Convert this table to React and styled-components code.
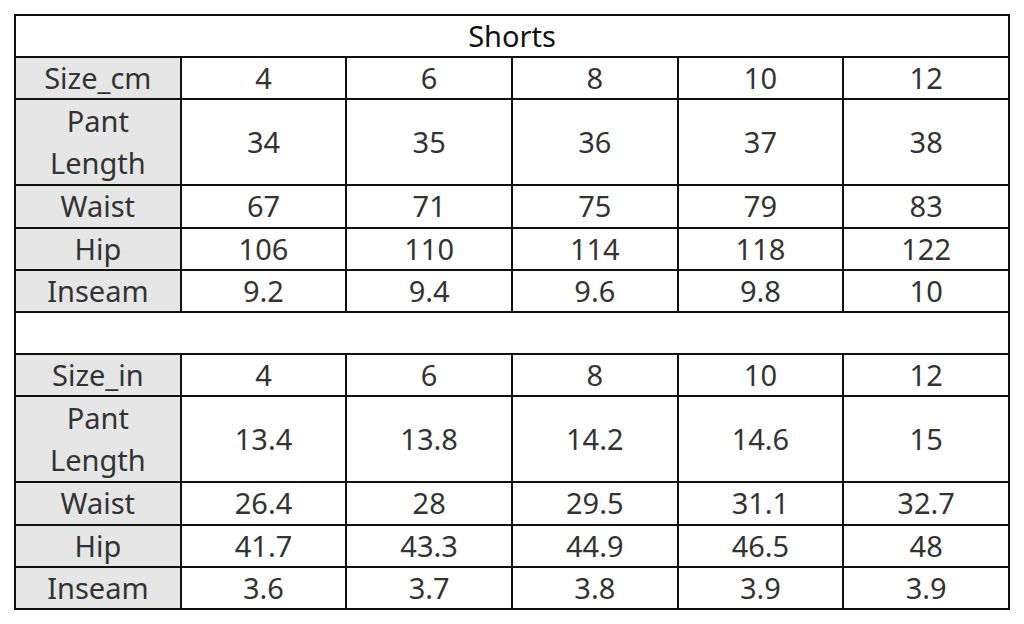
import styled, { createGlobalStyle } from "styled-components";

const GlobalStyle = createGlobalStyle`
  body {
    margin: 0;
    background: #ffffff;
    font-family: "Noto Sans", "Open Sans", sans-serif;
  }
`;

const Page = styled.div`
  padding: 14px 0 0 14px;
`;

const Table = styled.table`
  width: 996px;
  table-layout: fixed;
  border-collapse: collapse;
  border: 2px solid #111;
  color: #333;
  font-size: 29px;
`;

const Cell = styled.td`
  border: 2px solid #111;
  text-align: center;
  vertical-align: middle;
  padding: 0;
  line-height: ${(p) => (p.tall ? "42px" : "36px")};
  height: ${(p) => (p.tall ? "82.5px" : "40.2px")};
  background: ${(p) => (p.label ? "#e6e6e6" : "#ffffff")};
`;

const Title = styled.td`
  border: 2px solid #111;
  text-align: center;
  padding: 0;
  line-height: 36px;
  height: 40.2px;
  color: #111;
`;

const cm = [
  ["Size_cm", ["4", "6", "8", "10", "12"]],
  ["Pant Length", ["34", "35", "36", "37", "38"], true],
  ["Waist", ["67", "71", "75", "79", "83"]],
  ["Hip", ["106", "110", "114", "118", "122"]],
  ["Inseam", ["9.2", "9.4", "9.6", "9.8", "10"]],
];

const inch = [
  ["Size_in", ["4", "6", "8", "10", "12"]],
  ["Pant Length", ["13.4", "13.8", "14.2", "14.6", "15"], true],
  ["Waist", ["26.4", "28", "29.5", "31.1", "32.7"]],
  ["Hip", ["41.7", "43.3", "44.9", "46.5", "48"]],
  ["Inseam", ["3.6", "3.7", "3.8", "3.9", "3.9"]],
];

const Rows = ({ data }) =>
  data.map(([label, values, tall]) => (
    <tr key={label}>
      <Cell label="1" tall={tall}>
        {tall ? (
          <>
            Pant
            <br />
            Length
          </>
        ) : (
          label
        )}
      </Cell>
      {values.map((v, i) => (
        <Cell key={i} tall={tall}>
          {v}
        </Cell>
      ))}
    </tr>
  ));

const App = () => {
  return (
    <>
      <GlobalStyle />
      <Page>
        <Table>
          <tbody>
            <tr>
              <Title colSpan={6}>Shorts</Title>
            </tr>
            <Rows data={cm} />
            <tr>
              <Title colSpan={6}></Title>
            </tr>
            <Rows data={inch} />
          </tbody>
        </Table>
      </Page>
    </>
  );
};

export default App;
